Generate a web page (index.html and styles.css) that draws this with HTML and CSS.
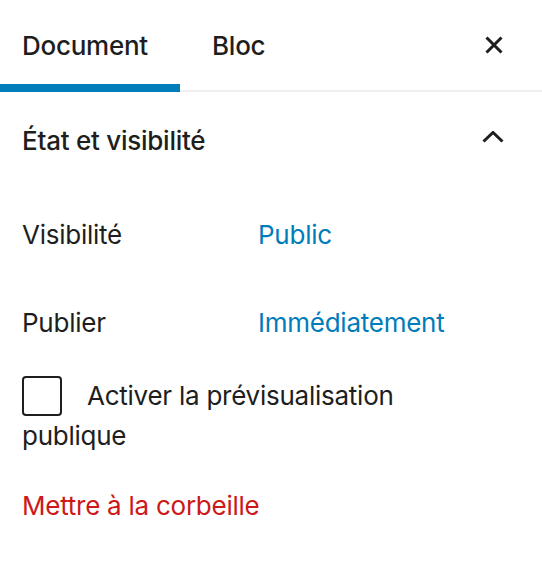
FILE: index.html
```html
<!DOCTYPE html>
<html lang="fr">
<head>
    <meta charset="UTF-8">
    <meta name="viewport" content="width=device-width, initial-scale=1.0">
    <title>Réglages du document</title>
    <link rel="stylesheet" href="styles.css">
</head>
<body>
    <div class="sidebar">
        <div class="tabs">
            <button class="tab active">Document</button>
            <button class="tab">Bloc</button>
            <button class="close" aria-label="Fermer les réglages">
                <svg width="18" height="18" viewBox="0 0 18 18"><path d="M1.5 1.5L16.5 16.5M16.5 1.5L1.5 16.5" /></svg>
            </button>
        </div>

        <div class="panel">
            <h2 class="panel-title">
                <button class="panel-toggle">
                    <span>État et visibilité</span>
                    <svg width="22" height="12" viewBox="0 0 22 12"><path d="M1.5 10.5L11 1.5L20.5 10.5" /></svg>
                </button>
            </h2>

            <div class="panel-body">
                <div class="row">
                    <span class="row-label">Visibilité</span>
                    <a href="#" class="row-value">Public</a>
                </div>
                <div class="row">
                    <span class="row-label">Publier</span>
                    <a href="#" class="row-value">Immédiatement</a>
                </div>
                <div class="check-row">
                    <input type="checkbox" id="public-preview"><label for="public-preview">Activer la prévisualisation publique</label>
                </div>
                <div class="trash">
                    <a href="#">Mettre à la corbeille</a>
                </div>
            </div>
        </div>
    </div>
</body>
</html>
```

FILE: styles.css
```css
body {
    margin: 0;
    background-color: #fff;
    color: #1e1e1e;
    font-family: 'Inter', 'Noto Sans', sans-serif;
    font-size: 26px;
    line-height: 40px;
    letter-spacing: -0.25px;
}
button {
    font: inherit;
    color: inherit;
    letter-spacing: inherit;
    background: none;
    border: none;
    padding: 0;
    cursor: pointer;
}

/* Tabs header */
.tabs {
    display: flex;
    align-items: stretch;
    height: 90px;
    border-bottom: 2px solid #f0f0f0;
}
.tab {
    padding: 0 32px;
    font-weight: 500;
    margin-bottom: -2px;
}
.tab:first-child {
    width: 180px;
    padding-left: 22px;
    padding-right: 0;
    text-align: left;
}
.tab.active {
    box-shadow: inset 0 -8px 0 #007cba;
}
.close {
    margin-left: auto;
    width: 60px;
    margin-right: 18px;
    display: flex;
    align-items: center;
    justify-content: center;
}
.close svg path {
    fill: none;
    stroke: #1e1e1e;
    stroke-width: 3;
}

/* Panel */
.panel-title {
    margin: 0;
    font-size: 26px;
    font-weight: 500;
}
.panel-toggle {
    display: flex;
    align-items: center;
    justify-content: space-between;
    width: 100%;
    padding: 29px 38px 29px 22px;
    text-align: left;
}
.panel-toggle svg {
    margin-top: -8px;
}
.panel-toggle svg path {
    fill: none;
    stroke: #1e1e1e;
    stroke-width: 3;
}
.panel-body {
    padding: 25px 38px 40px 22px;
}
.row {
    display: grid;
    grid-template-columns: 236px 1fr;
    margin-bottom: 48px;
}
.row:nth-child(2) {
    margin-bottom: 33px;
}
.row-value {
    color: #007cba;
    text-decoration: none;
}
.check-row input[type="checkbox"] {
    appearance: none;
    box-sizing: border-box;
    width: 40px;
    height: 40px;
    margin: 0 25px 0 0;
    border: 2px solid #1e1e1e;
    border-radius: 4px;
    vertical-align: top;
    background: #fff;
}
.trash {
    margin-top: 30px;
}
.trash a {
    color: #cc1818;
    text-decoration: none;
}
```
